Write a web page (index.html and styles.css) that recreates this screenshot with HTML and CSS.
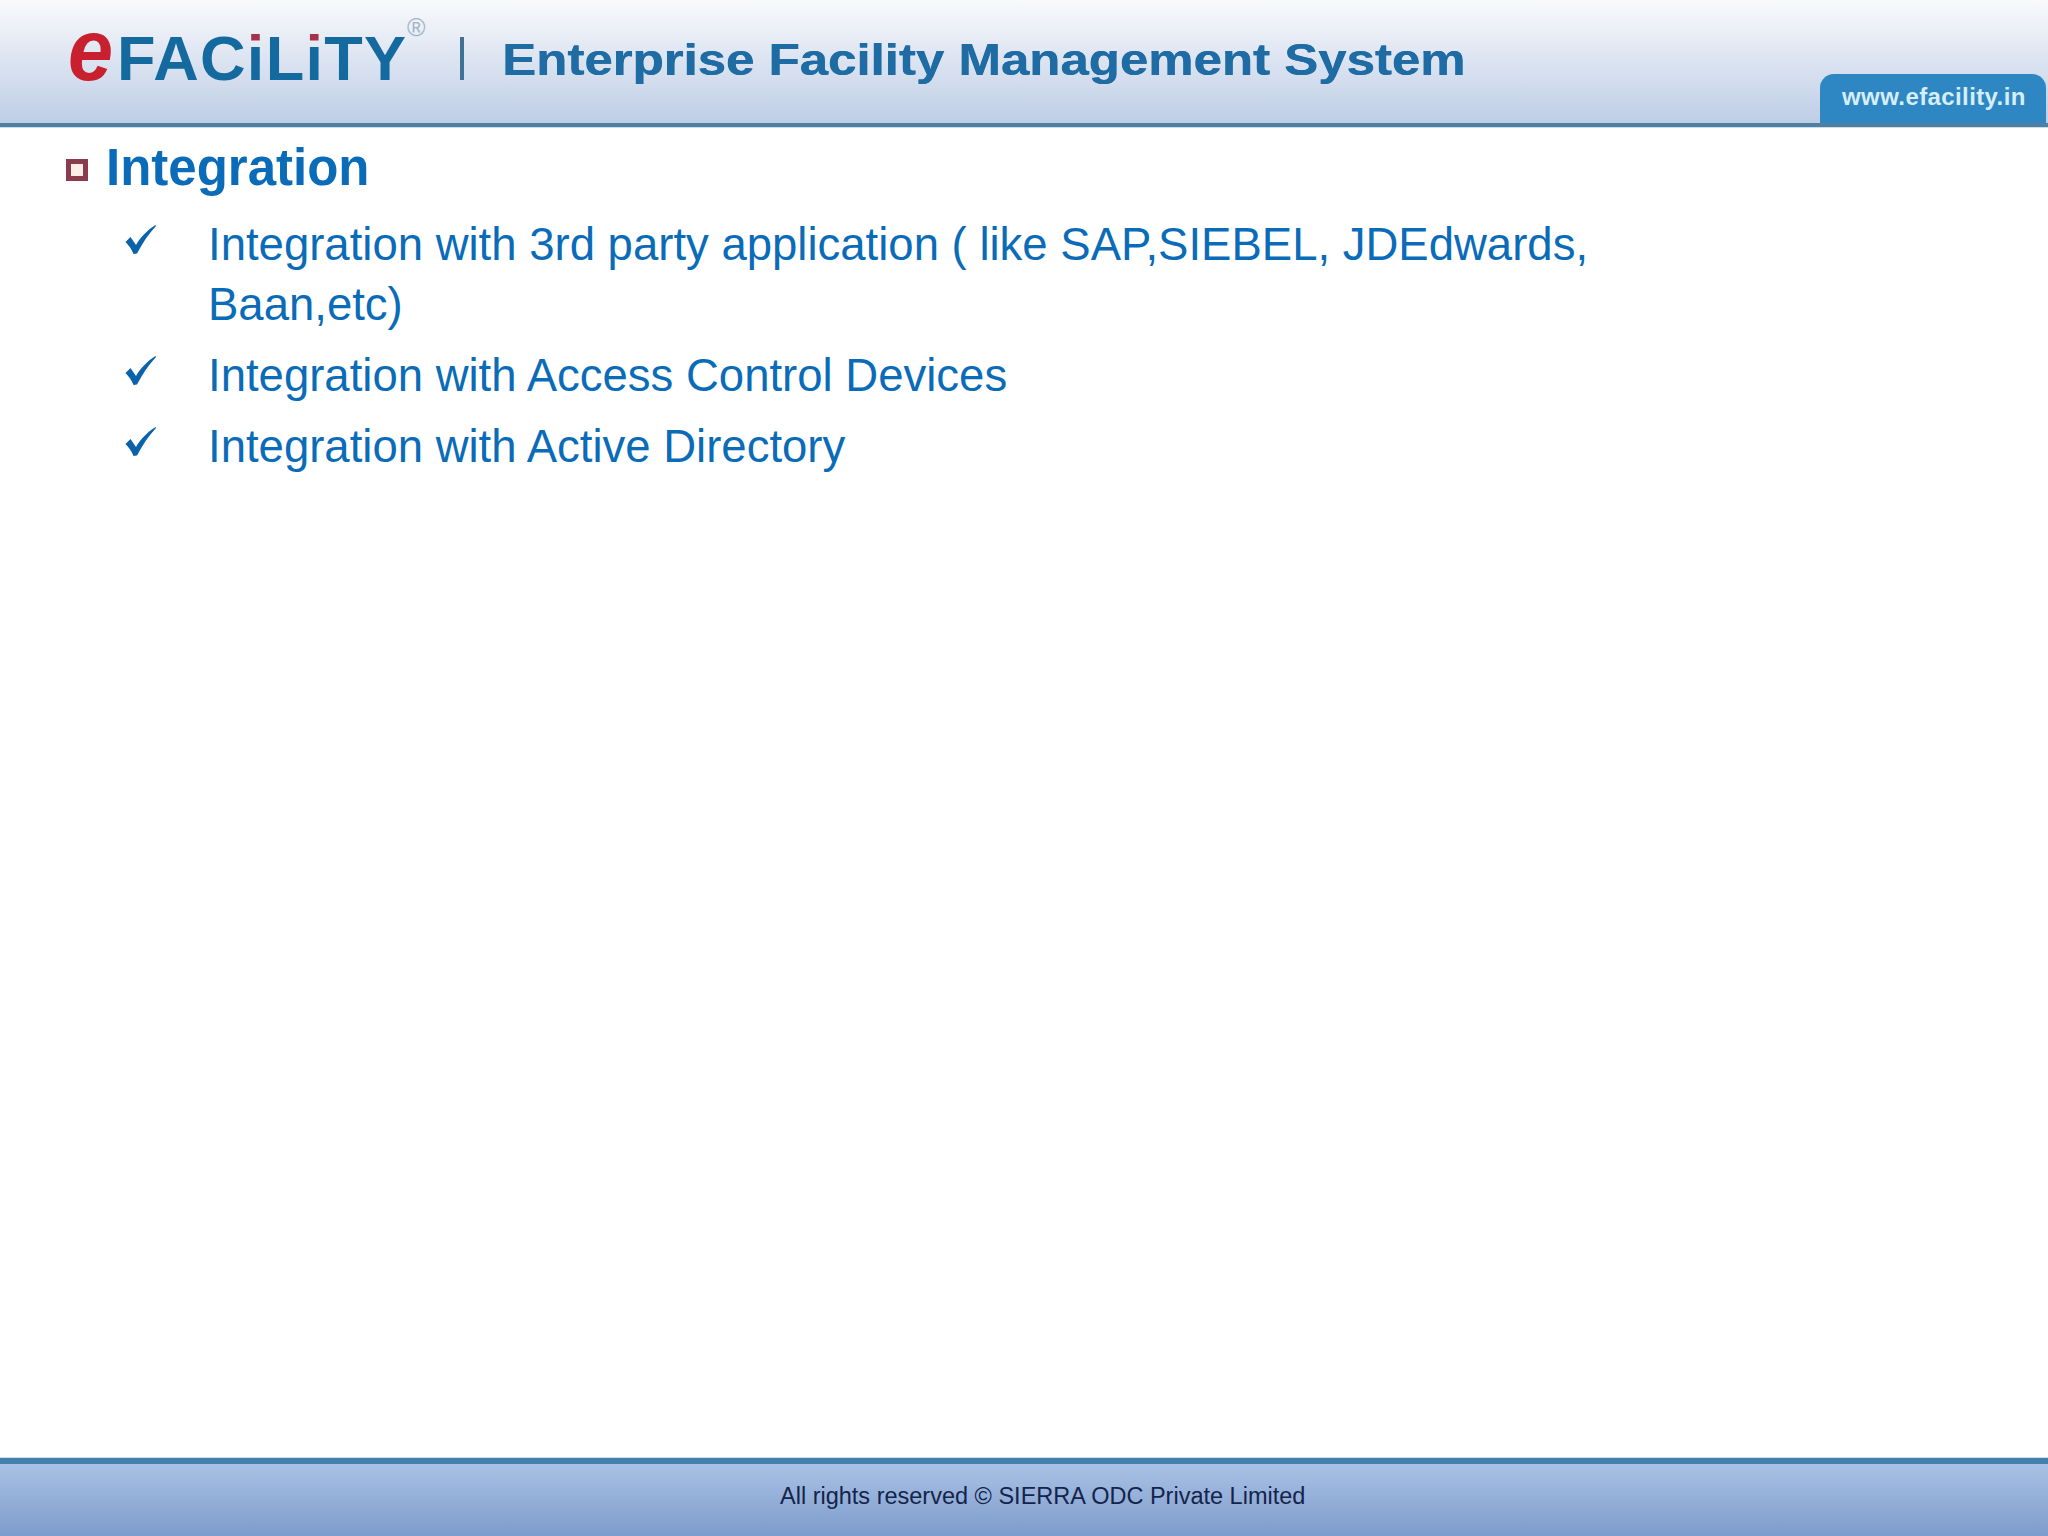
FILE: index.html
```html
<!DOCTYPE html>
<html lang="en">
<head>
<meta charset="utf-8">
<title>eFACiLiTY - Integration</title>
<link rel="stylesheet" href="styles.css">
</head>
<body>
<div class="slide">
  <header class="header">
    <div class="logo">
      <span class="logo-e">e</span><span class="logo-word">FAC<span class="logo-dot">i</span>L<span class="logo-dot">i</span>TY</span>
      <span class="logo-reg">®</span>
    </div>
    <span class="divider"></span>
    <div class="product">Enterprise Facility Management System</div>
    <div class="site-tab">www.efacility.in</div>
  </header>
  <main class="content">
    <h1 class="heading"><span class="square"></span>Integration</h1>
    <ul class="points">
      <li class="point"><svg class="check" viewBox="0 0 30 30"><path d="M0 17 L5 12 L10.5 20 C15 12 22 5 30 0 L30.5 1 C23 9 17 18 11.5 28.5 L8 29 C6 24 3.5 20.5 0 17 Z"/></svg><span class="point-text">Integration with 3rd party application ( like SAP,SIEBEL, JDEdwards, Baan,etc)</span></li>
      <li class="point"><svg class="check" viewBox="0 0 30 30"><path d="M0 17 L5 12 L10.5 20 C15 12 22 5 30 0 L30.5 1 C23 9 17 18 11.5 28.5 L8 29 C6 24 3.5 20.5 0 17 Z"/></svg><span class="point-text">Integration with Access Control Devices</span></li>
      <li class="point"><svg class="check" viewBox="0 0 30 30"><path d="M0 17 L5 12 L10.5 20 C15 12 22 5 30 0 L30.5 1 C23 9 17 18 11.5 28.5 L8 29 C6 24 3.5 20.5 0 17 Z"/></svg><span class="point-text">Integration with Active Directory</span></li>
    </ul>
  </main>
  <footer class="footer">All rights reserved © SIERRA ODC Private Limited</footer>
</div>
</body>
</html>
```
FILE: styles.css
```css
* { box-sizing: border-box; }
html, body { margin: 0; padding: 0; background: #fff; }
.slide {
  width: 2048px;
  height: 1536px;
  display: flex;
  flex-direction: column;
  font-family: "Liberation Sans", Arial, sans-serif;
  overflow: hidden;
}
.header {
  height: 127px;
  flex: none;
  display: flex;
  align-items: flex-start;
  padding-left: 68px;
  background: linear-gradient(#f8fafc 0, #e6ebf5 40px, #bfcfe6 120px);
  border-bottom: 4px solid #527f9f;
  box-shadow: 0 1px 0 #bfe2f5;
}
.logo {
  display: flex;
  align-items: baseline;
  height: 102px;
  padding-top: 3px;
  position: relative;
  width: 360px;
  flex: none;
}
.logo-e {
  font: italic 700 88px/94px "Liberation Sans", Arial, sans-serif;
  color: #c8202f;
  margin-right: 0;
  transform: scaleX(0.92);
  transform-origin: 0 100%;
}
.logo-word {
  font-weight: 700;
  font-size: 63px;
  line-height: 94px;
  color: #146a9f;
  letter-spacing: 1.3px;
  white-space: nowrap;
}
.logo-dot {
  background: linear-gradient(#a5324a 0, #a5324a 26%, #146a9f 30%);
  -webkit-background-clip: text;
  background-clip: text;
  color: transparent;
}
.logo-reg {
  position: absolute;
  left: 339px;
  top: 13px;
  font-size: 25px;
  line-height: 28px;
  color: #9fb4c8;
}
.divider {
  flex: none;
  width: 4px;
  height: 43px;
  margin-top: 37px;
  margin-left: 32px;
  background: #3f7295;
}
.product {
  flex: none;
  margin-left: 38px;
  margin-top: 32px;
  font-weight: 700;
  font-size: 45px;
  line-height: 56px;
  white-space: nowrap;
  color: #1f6ba3;
  transform: scaleX(1.133);
  transform-origin: 0 50%;
  text-shadow: 0.5px 0 0 currentColor;
}
.site-tab {
  flex: none;
  margin-left: auto;
  margin-right: 2px;
  margin-top: 74px;
  width: 226px;
  height: 49px;
  padding-left: 22px;
  border-radius: 14px 14px 0 0;
  background: #2e87c2;
  color: #d6eefa;
  font-weight: 700;
  font-size: 24px;
  line-height: 46px;
  letter-spacing: 0.4px;
}
.content {
  flex: 1;
  padding: 10px 0 0 64px;
}
.heading {
  margin: 0;
  display: flex;
  align-items: center;
  font-size: 51px;
  line-height: 62px;
  font-weight: 700;
  color: #0a6cb8;
}
.square {
  flex: none;
  width: 22px;
  height: 22px;
  margin: 3px 18px 0 2px;
  border: 5px solid #8a3b4e;
  background: #fdeee8;
}
.points {
  list-style: none;
  margin: 16px 0 0;
  padding: 0 0 0 61px;
  width: 1600px;
}
.point {
  display: flex;
  align-items: flex-start;
  margin-bottom: 11px;
  font-size: 45.5px;
  line-height: 60px;
  color: #0a6cb8;
}
.check {
  flex: none;
  width: 31px;
  height: 30px;
  margin: 10px 52px 0 0;
  fill: #0a62ab;
}
.point-text { max-width: 1400px; }
.footer {
  flex: none;
  height: 78px;
  border-top: 6px solid #447fae;
  background: linear-gradient(#a9c1e5, #7d9ccc);
  box-shadow: 0 -1px 0 #c6e2f2;
  padding: 12px 0 0 780px;
  font-size: 23.5px;
  line-height: 40px;
  color: #14244a;
}
```
